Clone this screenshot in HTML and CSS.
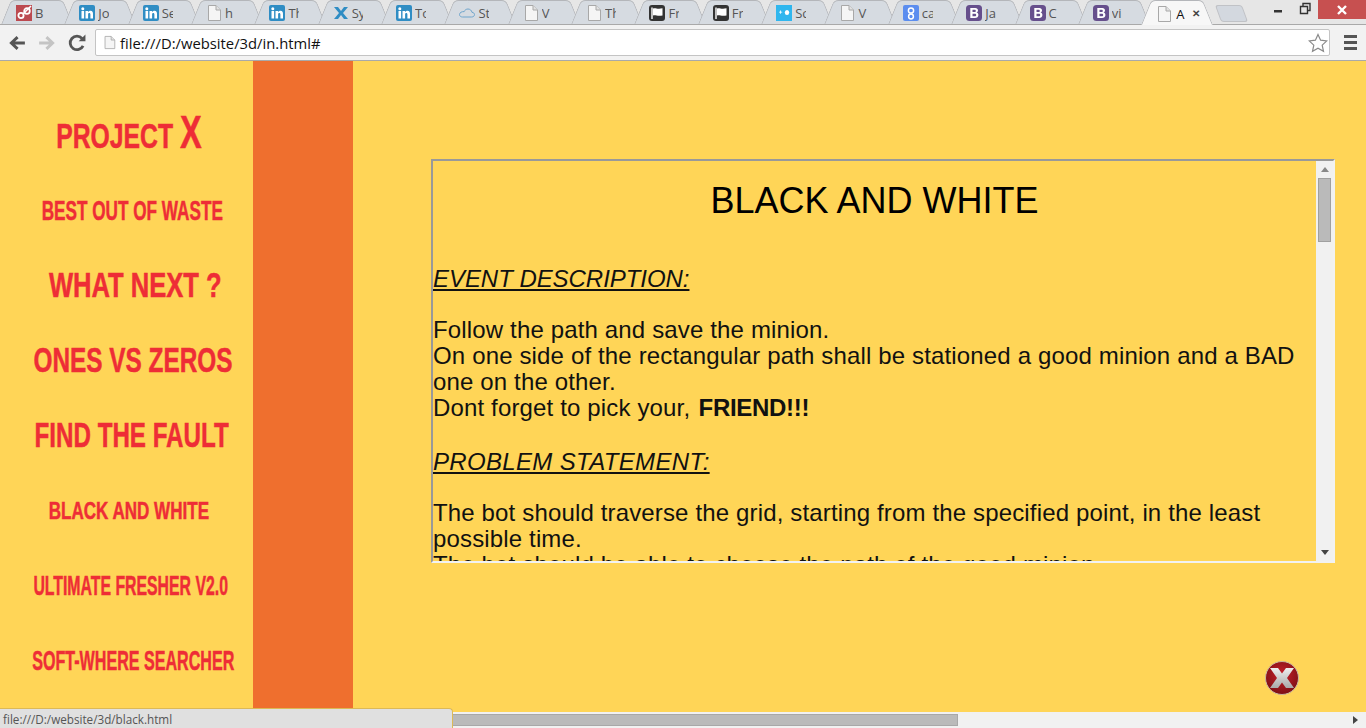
FILE: index.html
```html
<!DOCTYPE html>
<html lang="en">
<head>
    <meta charset="UTF-8">
    <title>Black and White</title>
    <link rel="stylesheet" href="styles.css">
</head>
<body>
<svg class="defs" width="0" height="0">
    <symbol id="i-doc" viewBox="0 0 16 16"><path d="M2.5 .5H10L14.5 5V15.5H2.5Z" fill="#f5f5f5" stroke="#a8a8a8"/><path d="M10 .5V5H14.5" fill="#e2e2e2" stroke="#a8a8a8"/></symbol>
    <symbol id="i-in" viewBox="0 0 16 16"><rect width="16" height="16" rx="2" fill="#2f8dc4"/><rect x="2.5" y="6" width="2.6" height="7.5" fill="#fff"/><circle cx="3.8" cy="3.8" r="1.5" fill="#fff"/><path d="M6.5 6H9V7.2C9.5 6.4 10.4 5.8 11.5 5.8 13.5 5.8 14 7.2 14 9V13.5H11.4V9.6C11.4 8.7 11.1 8 10.2 8 9.4 8 9.1 8.700 9.100 9.500V13.500H6.500Z" fill="#fff"/></symbol>
    <symbol id="i-red" viewBox="0 0 16 16"><rect width="16" height="16" fill="#bc4a50"/><circle cx="5" cy="10.500" r="2.600" fill="none" stroke="#fff" stroke-width="1.800"/><circle cx="11" cy="6" r="2.800" fill="none" stroke="#fff" stroke-width="1.800"/><path d="M7 9L15 1" stroke="#fff" stroke-width="1.600"/></symbol>
    <symbol id="i-x" viewBox="0 0 16 16"><path d="M1 2H5L8 6 11 2H15L10 8 15 14H11L8 10 5 14H1L6 8Z" fill="#2f8dc4"/></symbol>
    <symbol id="i-cloud" viewBox="0 0 16 16"><path d="M3.500 12H12.500C14.500 12 15.500 10.800 15.500 9.600 15.500 8.400 14.500 7.400 13 7.400 12.600 5.400 11 4 9 4 7.200 4 5.800 5 5.200 6.600 3 6.400 .5 7.500 .5 9.500 .5 11 1.800 12 3.500 12Z" fill="none" stroke="#6fa5cc"/></symbol>
    <symbol id="i-flag" viewBox="0 0 16 16"><rect width="16" height="16" rx="3" fill="#333"/><path d="M3 2.500V14" stroke="#fff" stroke-width="1.400"/><path d="M4 3.500C6.500 2.500 8 4.500 13.500 3.300V10.500C8 11.500 6.500 9.500 4 10.500Z" fill="#fff"/></symbol>
    <symbol id="i-sc" viewBox="0 0 16 16"><rect width="16" height="16" fill="#2fb6ee"/><path d="M3 6.800H4.200V5.600H5V6.800H6.200V7.600H5V8.800H4.200V7.600H3Z" fill="#fff"/><ellipse cx="11" cy="7.500" rx="2.200" ry="2.600" fill="#fff"/></symbol>
    <symbol id="i-g" viewBox="0 0 16 16"><rect width="16" height="16" rx="2" fill="#5b8def"/><circle cx="8" cy="5.500" r="2.600" fill="none" stroke="#fff" stroke-width="1.500"/><circle cx="8" cy="11.500" r="2.400" fill="none" stroke="#fff" stroke-width="1.500"/></symbol>
    <symbol id="i-b" viewBox="0 0 16 16"><rect width="16" height="16" rx="3.500" fill="#664f8c"/><path fill-rule="evenodd" d="M4.300 3H9.200C11 3 12 4 12 5.300 12 6.400 11.400 7.200 10.500 7.500 11.600 7.700 12.400 8.600 12.400 9.900 12.400 11.700 11.100 13 9 13H4.300ZM6.500 4.800V7H8.600C9.400 7 9.800 6.500 9.800 5.900 9.800 5.200 9.400 4.800 8.600 4.800ZM6.500 8.700V11.200H8.800C9.700 11.200 10.200 10.700 10.200 9.900 10.200 9.200 9.700 8.700 8.800 8.700Z" fill="#fff"/></symbol>
</svg>

<div class="tabbar">
    <div class="tabs">
        <div class="tab"><svg class="fav"><use href="#i-red"/></svg><span class="tab-name">B</span></div>
        <div class="tab"><svg class="fav"><use href="#i-in"/></svg><span class="tab-name">Jo</span></div>
        <div class="tab"><svg class="fav"><use href="#i-in"/></svg><span class="tab-name">Se</span></div>
        <div class="tab"><svg class="fav"><use href="#i-doc"/></svg><span class="tab-name">h</span></div>
        <div class="tab"><svg class="fav"><use href="#i-in"/></svg><span class="tab-name">Th</span></div>
        <div class="tab"><svg class="fav"><use href="#i-x"/></svg><span class="tab-name">Sy</span></div>
        <div class="tab"><svg class="fav"><use href="#i-in"/></svg><span class="tab-name">To</span></div>
        <div class="tab"><svg class="fav"><use href="#i-cloud"/></svg><span class="tab-name">St</span></div>
        <div class="tab"><svg class="fav"><use href="#i-doc"/></svg><span class="tab-name">V</span></div>
        <div class="tab"><svg class="fav"><use href="#i-doc"/></svg><span class="tab-name">Th</span></div>
        <div class="tab"><svg class="fav"><use href="#i-flag"/></svg><span class="tab-name">Fr</span></div>
        <div class="tab"><svg class="fav"><use href="#i-flag"/></svg><span class="tab-name">Fr</span></div>
        <div class="tab"><svg class="fav"><use href="#i-sc"/></svg><span class="tab-name">Sc</span></div>
        <div class="tab"><svg class="fav"><use href="#i-doc"/></svg><span class="tab-name">V</span></div>
        <div class="tab"><svg class="fav"><use href="#i-g"/></svg><span class="tab-name">ca</span></div>
        <div class="tab"><svg class="fav"><use href="#i-b"/></svg><span class="tab-name">Ja</span></div>
        <div class="tab"><svg class="fav"><use href="#i-b"/></svg><span class="tab-name">C</span></div>
        <div class="tab"><svg class="fav"><use href="#i-b"/></svg><span class="tab-name">vi</span></div>
        <div class="tab tab-active"><svg class="fav"><use href="#i-doc"/></svg><span class="tab-name">A</span><span class="tab-close">&#10005;</span></div>
        <div class="tab-new"></div>
    </div>
    <div class="win-btns">
        <svg class="win-btn" viewBox="0 0 26 19"><rect x="8" y="10" width="8" height="2.500" fill="#333"/></svg>
        <svg class="win-btn" viewBox="0 0 26 19"><path d="M8.500 6.500H15.500V13.500H8.500ZM11 6.500V3.500H18V10.500H15.500" fill="none" stroke="#333" stroke-width="1.400"/></svg>
        <div class="win-close"><svg width="12" height="12" viewBox="0 0 12 12"><path d="M2 2L10 10M10 2L2 10" stroke="#fff" stroke-width="2.400"/></svg></div>
    </div>
</div>

<div class="toolbar">
    <svg class="nav-btn" viewBox="0 0 16 16"><path d="M15 8H4M8.500 2.800L3 8 8.500 13.200" fill="none" stroke="#555" stroke-width="2.600"/></svg>
    <svg class="nav-btn" viewBox="0 0 16 16"><path d="M1 8H12M7.500 2.800L13 8 7.500 13.200" fill="none" stroke="#c4c4c4" stroke-width="2.600"/></svg>
    <svg class="nav-btn" viewBox="0 0 16 16"><path d="M13.400 10.500A6 6 0 1 1 12.500 4" fill="none" stroke="#555" stroke-width="2.500"/><path d="M9.500 6.500H15.500V.5Z" fill="#555"/></svg>
    <div class="omnibox">
        <svg class="omni-doc"><use href="#i-doc"/></svg>
        <span class="url">file:///D:/website/3d/in.html#</span>
        <svg class="star" viewBox="0 0 20 20"><path d="M10 1.500L12.600 7.200 18.800 7.900 14.200 12.100 15.500 18.300 10 15.200 4.500 18.300 5.800 12.100 1.200 7.900 7.400 7.200Z" fill="#fff" stroke="#8a8a8a" stroke-width="1.200"/></svg>
    </div>
    <div class="menu-btn"><span></span><span></span><span></span></div>
</div>

<div class="page">
    <div class="page-main">
        <nav class="side">
            <a class="side-item" href="#"><span class="s35 w-project">PROJECT <span class="big-x">X</span></span></a>
            <a class="side-item" href="#"><span class="s28 w-best">BEST OUT OF WASTE</span></a>
            <a class="side-item" href="#"><span class="s35 w-next">WHAT NEXT ?</span></a>
            <a class="side-item" href="#"><span class="s35 w-ones">ONES VS ZEROS</span></a>
            <a class="side-item" href="#"><span class="s35 w-find">FIND THE FAULT</span></a>
            <a class="side-item" href="#"><span class="s24 w-black">BLACK AND WHITE</span></a>
            <a class="side-item" href="#"><span class="s28 w-ultimate">ULTIMATE FRESHER V2.0</span></a>
            <a class="side-item" href="#"><span class="s28 w-soft">SOFT-WHERE SEARCHER</span></a>
        </nav>
        <div class="band"></div>
        <div class="content">
            <div class="panel">
                <div class="panel-text">
                    <h1>BLACK AND WHITE</h1>
                    <p class="head">EVENT DESCRIPTION:</p>
                    <p>Follow the path and save the minion.<br>
                    On one side of the rectangular path shall be stationed a good minion and a BAD one on the other.<br>
                    Dont forget to pick your, <b>FRIEND!!!</b></p>
                    <p class="head head-wide">PROBLEM STATEMENT:</p>
                    <p>The bot should traverse the grid, starting from the specified point, in the least possible time.<br>
                    The bot should be able to choose the path of the good minion.</p>
                </div>
                <div class="vbar">
                    <span class="arrow-up"></span>
                    <span class="vthumb"></span>
                    <span class="arrow-down"></span>
                </div>
            </div>
        </div>
    </div>
    <div class="hbar">
        <span class="hthumb"></span>
        <span class="arrow-right"></span>
    </div>
    <svg class="close-ico" viewBox="0 0 36 36">
        <defs>
            <radialGradient id="redball" cx="50%" cy="40%" r="60%"><stop offset="0" stop-color="#c8202a"/><stop offset="1" stop-color="#7d1015"/></radialGradient>
            <linearGradient id="greyx" x1="0" y1="0" x2="0" y2="1"><stop offset="0" stop-color="#eee"/><stop offset="1" stop-color="#a9a9a9"/></linearGradient>
        </defs>
        <circle cx="18" cy="18" r="16.500" fill="url(#redball)" stroke="#c9b9a0"/>
        <path d="M6 8H14L18 13.500 22 8H30L23 18 30 28H22L18 22.500 14 28H6L13 18Z" fill="url(#greyx)"/>
    </svg>
    <div class="status">file:///D:/website/3d/black.html</div>
</div>
</body>
</html>
```

FILE: styles.css
```css
html,body{ margin:0;padding:0;height:100%;overflow:hidden; }
body{ width:1366px;height:728px;font-family:"Liberation Sans",Arial,sans-serif;background:#ffd557; }
.defs{ display:block;height:0; }
p,h1{ margin:0; }

/* tab strip */
.tabbar{ display:flex;justify-content:space-between;height:25px;background:#e6e6e6;border-bottom:1px solid #a9a9a9;box-sizing:border-box; }
.tabs{ display:flex;padding-left:3px;height:25px; }
.tab{
    position:relative;
    display:flex;
    align-items:center;
    width:63.350px;
    height:24px;
    padding:2px 0 0 13px;
    box-sizing:border-box;
    flex:none;
}
.tab::before{
    content:"";
    position:absolute;
    left:3px;right:26px;top:0;bottom:0;
    background:#d6dbe1;
    border:1px solid #b4b6ba;
    border-bottom:0;
    border-radius:5px 0 0 0;
    transform:skewX(-22deg);
    z-index:0;
}
.tab::after{
    content:"";
    position:absolute;
    left:26px;right:-2px;top:0;bottom:0;
    background:#d6dbe1;
    border:1px solid #b4b6ba;
    border-bottom:0;
    border-left:0;
    border-radius:0 5px 0 0;
    transform:skewX(22deg);
    z-index:0;
}
.fav{ position:relative;z-index:1;width:16px;height:16px;flex:none; }
.tab-name{ position:relative;z-index:1;width:11px;margin-left:3px;overflow:hidden;white-space:nowrap;font:13px "Open Sans",sans-serif;color:#555; }
.tab-active{ z-index:2;height:25px; }
.tab-active::before,.tab-active::after{ background:#f7f7f7; }
.tab-active .tab-name{ color:#111;width:14px;margin-left:4px; }
.tab-close{ position:relative;z-index:1;font-size:10px;font-weight:bold;color:#444;margin-left:2px; }
.tab-new{ width:25px;height:15px;margin:5px 0 0 11px;background:#d3d8df;border:1px solid #c0c2c6;border-radius:3px;transform:skewX(20deg); }
.win-btns{ display:flex;height:19px; }
.win-btn{ width:26px;height:19px; }
.win-close{ display:flex;align-items:center;justify-content:center;width:48px;height:19px;background:#c75050; }

/* toolbar */
.toolbar{ display:flex;align-items:center;height:35px;padding:0 9px 0 8px;background:#f2f2f2;border-bottom:1px solid #a9a9a9; }
.nav-btn{ width:18px;height:18px;margin-right:12px;flex:none; }
.omnibox{ display:flex;align-items:center;flex:1;height:25px;margin-left:-3px;padding:0 1px 0 7px;background:#fff;border:1px solid #c4c4c4;border-radius:2px; }
.omni-doc{ width:13px;height:15px;flex:none; }
.url{ flex:1;margin-left:4px;font:14.800px "Open Sans",sans-serif;color:#111; }
.star{ width:20px;height:20px; }
.menu-btn{ display:flex;flex-direction:column;gap:3px;width:13px;margin-left:14px; }
.menu-btn span{ height:3px;background:#555; }

/* page */
.page{ display:flex;flex-direction:column;height:667px;position:relative;overflow:hidden; }
.page-main{ display:flex;flex:1;min-height:0; }
.side{ display:flex;flex-direction:column;width:253px;padding-top:37px;box-sizing:border-box;flex:none;overflow:hidden; }
.side-item{ display:flex;align-items:center;justify-content:center;height:75px;flex:none;text-decoration:none;color:#ee2d36;font-family:"Liberation Sans",sans-serif;font-weight:bold;white-space:nowrap; }
.side-item > span{ display:inline-block;flex:none;-webkit-text-stroke:.5px #ee2d36; }
.s35{ font-size:35px;margin-top:-2px; }
.s28{ font-size:28px; }
.s24{ font-size:24px; }
.big-x{ font-size:46px; }
/* no condensed display font here, so each label is squeezed to its own width */
.w-project{ margin-top:-8px;transform:translateX(2px) scaleX(.707); }
.w-best{ transform:translateX(5.500px) scaleX(.613); }
.w-next{ transform:translateX(9px) scaleX(.73); }
.w-ones{ transform:translateX(6px) scaleX(.696); }
.w-find{ transform:translateX(5px) scaleX(.69); }
.w-black{ transform:translateX(2px) scaleX(.71); }
.w-ultimate{ transform:translateX(4.500px) scaleX(.565); }
.w-soft{ transform:translateX(6.500px) scaleX(.575); }
.band{ width:100px;background:#ef6f2e;flex:none; }
.content{ flex:1;padding:98px 31px 0 78px; }

.panel{ display:flex;height:404px;box-sizing:border-box;border:2px solid;border-color:#999 #f2f2f2 #f2f2f2 #999; }
.panel-text{ flex:1;overflow:hidden;font-size:24px;line-height:26px;letter-spacing:.15px;color:#111; }
.panel-text h1{ font-size:36px;font-weight:normal;line-height:41px;letter-spacing:0;text-align:center;padding:19px 0 45px;color:#000; }
.panel-text b{ letter-spacing:-.3px;margin-left:1.500px; }
.panel-text .head{ font-style:italic;text-decoration:underline;letter-spacing:-.05px;margin-bottom:25px; }
.panel-text .head-wide{ letter-spacing:.33px; }
.panel-text p + .head{ margin-top:28px; }
.vbar{ position:relative;width:17px;background:#f1f1f1;flex:none;display:flex;flex-direction:column;align-items:center; }
.arrow-up{ margin-top:6px;border:4px solid transparent;border-top:0;border-bottom:5px solid #888; }
.vthumb{ width:13px;height:64px;margin-top:6px;background:#bababa;border:1px solid #a0a0a0;box-sizing:border-box; }
.arrow-down{ margin-top:auto;margin-bottom:6px;border:4px solid transparent;border-bottom:0;border-top:5px solid #444; }

.hbar{ display:flex;align-items:center;height:16px;padding:0 8px 0 16px;background:#f1f1f1;flex:none;justify-content:space-between; }
.hthumb{ width:942px;height:12px;background:#bababa;border:1px solid #a8a8a8;box-sizing:border-box; }
.arrow-right{ border:4px solid transparent;border-right:0;border-left:5px solid #444; }

.close-ico{ position:absolute;left:1264px;top:599px;width:36px;height:36px; }
.status{
    position:absolute;
    left:0;bottom:0;
    width:453px;
    height:20px;
    padding:2px 0 0 3px;
    box-sizing:border-box;
    background:#e0e0e0;
    border-top:1px solid #dcb957;
    border-right:1px solid #dcb957;
    border-top-right-radius:4px;
    font:11.700px "Open Sans",sans-serif;
    color:#555;
}
```
